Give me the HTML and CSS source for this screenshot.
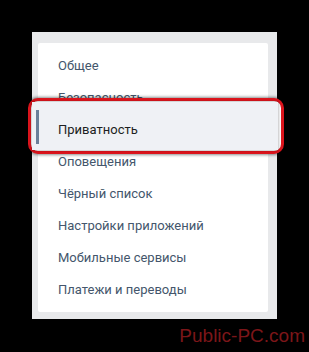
FILE: index.html
```html
<!doctype html>
<html lang="ru">
	<head>
		<meta charset="UTF-8" />
		<title>Настройки</title>
		<link rel="stylesheet" href="styles.css">
	</head>
	<body>
		<div class="panel">
			<nav class="menu">
				<a class="menuItem">Общее</a>
				<a class="menuItem">Безопасность</a>
				<a class="menuItem active">
					<span class="marker"></span>
					<span class="label">Приватность</span>
				</a>
				<a class="menuItem">Оповещения</a>
				<a class="menuItem">Чёрный список</a>
				<a class="menuItem">Настройки приложений</a>
				<a class="menuItem">Мобильные сервисы</a>
				<a class="menuItem">Платежи и переводы</a>
			</nav>
		</div>
		<div class="watermark">Public-PC.com</div>
	</body>
</html>
```

FILE: styles.css
```css
*,
*::before,
*::after {
	box-sizing: border-box;
	margin: 0;
	padding: 0;
}

body {
	background: #000;
	width: 309px;
	height: 352px;
	overflow: hidden;
	font-family: Roboto, 'Open Sans', 'Liberation Sans', sans-serif;
}

.panel {
	margin: 32px 0 0 32px;
	width: 245px;
	height: 287px;
	background: #e8e9eb;
	padding: 11px 9px 7px 6px;
}

.menu {
	background: #fff;
	border-radius: 2px;
	height: 100%;
	padding: 6px 0 7px;
	display: flex;
	flex-direction: column;
}

.menuItem {
	display: flex;
	align-items: center;
	height: 32px;
	padding-left: 20px;
	font-size: 13px;
	color: #44566c;
}

.menuItem.active {
	position: relative;
	color: #1d1f22;
}

/* red callout ring */
.menuItem.active::before {
	content: "";
	position: absolute;
	left: -10px;
	right: -16px;
	top: -15px;
	bottom: -9px;
	border: 3px solid #dc141c;
	border-radius: 10px;
	background: #fbfbfc;
	box-shadow: 0 0 3px 1px rgba(0, 0, 0, 0.45);
}

/* enlarged selected row */
.menuItem.active::after {
	content: "";
	position: absolute;
	left: -6px;
	right: -10px;
	top: -11px;
	bottom: -5px;
	background: #eff1f5;
	box-shadow: 0 0 2px 1px rgba(0, 0, 0, 0.22);
}

.marker {
	position: absolute;
	left: -2px;
	top: -3px;
	width: 3px;
	height: 34px;
	background: #6b7f99;
	z-index: 2;
}

.label {
	position: relative;
	z-index: 2;
}

.watermark {
	margin-top: 6px;
	padding-right: 4px;
	text-align: right;
	font-family: 'Liberation Sans', Arial, sans-serif;
	font-size: 19px;
	color: #7c1619;
}
```
